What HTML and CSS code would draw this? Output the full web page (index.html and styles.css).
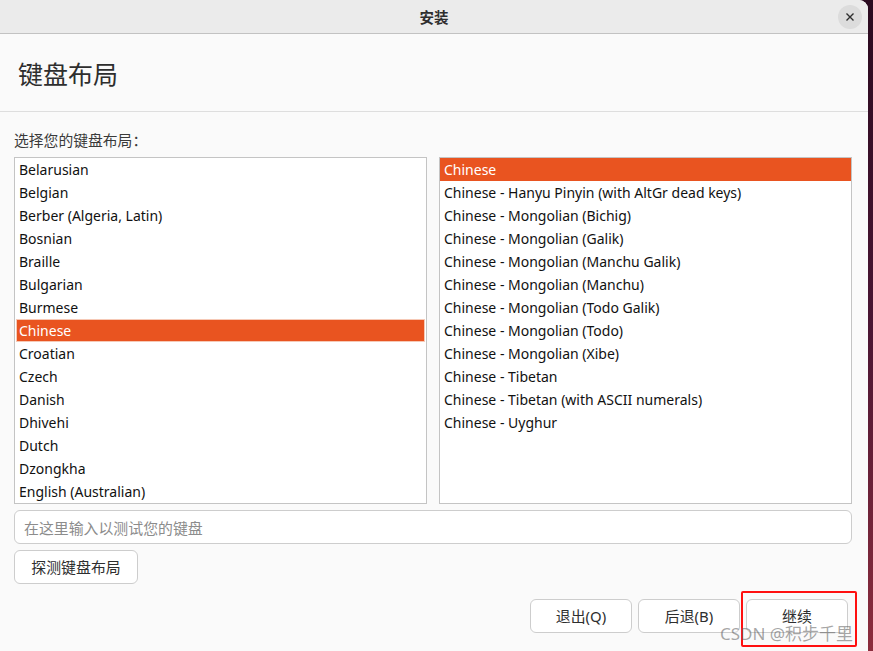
FILE: index.html
```html
<!DOCTYPE html>
<html lang="zh">
<head>
<meta charset="utf-8">
<title>安装</title>
<link rel="stylesheet" href="styles.css">
</head>
<body>
<div class="desktop">
  <div class="window">
    <div class="titlebar">
      <span></span>
      <span class="title">安装</span>
      <button class="close" aria-label="close">
        <svg width="10" height="10" viewBox="0 0 10 10"><path d="M1.5 1.5 L8.5 8.5 M8.5 1.5 L1.5 8.5" stroke="#2e2e2e" stroke-width="1.4" fill="none"/></svg>
      </button>
    </div>
    <div class="header">键盘布局</div>
    <div class="content">
      <div class="label">选择您的键盘布局<span class="colon">：</span></div>
      <div class="lists">
        <div class="list focused">
          <div class="row">Belarusian</div>
          <div class="row">Belgian</div>
          <div class="row">Berber (Algeria, Latin)</div>
          <div class="row">Bosnian</div>
          <div class="row">Braille</div>
          <div class="row">Bulgarian</div>
          <div class="row">Burmese</div>
          <div class="row selected">Chinese</div>
          <div class="row">Croatian</div>
          <div class="row">Czech</div>
          <div class="row">Danish</div>
          <div class="row">Dhivehi</div>
          <div class="row">Dutch</div>
          <div class="row">Dzongkha</div>
          <div class="row">English (Australian)</div>
        </div>
        <div class="list">
          <div class="row selected">Chinese</div>
          <div class="row">Chinese - Hanyu Pinyin (with AltGr dead keys)</div>
          <div class="row">Chinese - Mongolian (Bichig)</div>
          <div class="row">Chinese - Mongolian (Galik)</div>
          <div class="row">Chinese - Mongolian (Manchu Galik)</div>
          <div class="row">Chinese - Mongolian (Manchu)</div>
          <div class="row">Chinese - Mongolian (Todo Galik)</div>
          <div class="row">Chinese - Mongolian (Todo)</div>
          <div class="row">Chinese - Mongolian (Xibe)</div>
          <div class="row">Chinese - Tibetan</div>
          <div class="row">Chinese - Tibetan (with ASCII numerals)</div>
          <div class="row">Chinese - Uyghur</div>
        </div>
      </div>
      <input class="test-input" type="text" placeholder="在这里输入以测试您的键盘">
      <div class="detect-row"><button class="btn detect">探测键盘布局</button></div>
    </div>
    <div class="footer">
      <button class="btn">退出(Q)</button>
      <button class="btn">后退(B)</button>
      <button class="btn continue">继续
        <span class="mark"></span>
      </button>
    </div>
    <div class="watermark">CSDN @积步千里</div>
  </div>
</div>
</body>
</html>
```
FILE: styles.css
```css
* { box-sizing: border-box; }
html, body { margin: 0; padding: 0; }
body {
  width: 873px;
  height: 651px;
  overflow: hidden;
  font-family: "Noto Sans", "Noto Sans CJK SC", sans-serif;
  background: linear-gradient(180deg, #2a0a1f 0%, #4a1533 50%, #8c2d3d 100%);
}
.desktop { width: 873px; height: 651px; }
.window {
  position: relative;
  width: 868px;
  height: 651px;
  background: #fafafa;
  border-top-right-radius: 9px;
  display: flex;
  flex-direction: column;
  overflow: hidden;
}
.titlebar {
  height: 34px;
  flex: none;
  background: #ebebeb;
  border-bottom: 1px solid #c2c2c2;
  display: grid;
  grid-template-columns: 1fr auto 1fr;
  align-items: center;
}
.title {
  font-family: "Noto Sans CJK SC", sans-serif;
  font-weight: 700;
  font-size: 14.5px;
  color: #2e2e2e;
}
.close {
  justify-self: end;
  margin-right: 6px;
  width: 24px;
  height: 24px;
  border-radius: 50%;
  border: none;
  background: #dcdcdc;
  padding: 0;
  display: flex;
  align-items: center;
  justify-content: center;
}
.header {
  height: 78px;
  flex: none;
  padding-left: 18px;
  display: flex;
  align-items: center;
  font-family: "Noto Sans CJK SC", sans-serif;
  font-size: 25px;
  color: #2e2e2e;
  border-bottom: 1px solid #dedede;
}
.content {
  padding: 18px 16px 0 14px;
  display: flex;
  flex-direction: column;
}
.label {
  font-family: "Noto Sans CJK SC", sans-serif;
  font-size: 14.8px;
  line-height: 20px;
  color: #3a3a3a;
  margin-bottom: 7px;
}
.colon { font-family: "Noto Sans CJK TC", sans-serif; }
.lists {
  display: grid;
  grid-template-columns: 413px 413px;
  gap: 12px;
}
.list {
  height: 347px;
  border: 1px solid #c4c4c4;
  background: #ffffff;
  overflow: hidden;
}
.row {
  height: 23px;
  line-height: 23px;
  padding-left: 4px;
  font-size: 14px;
  color: #111111;
  white-space: nowrap;
}
.row.selected {
  background: #e95420;
  color: #ffffff;
}
.list.focused .row.selected {
  margin: 0 1px;
  padding-left: 3px;
  box-shadow: inset 0 0 0 1px #f6c9b6;
}
.test-input {
  margin-top: 6px;
  height: 34px;
  width: 838px;
  border: 1px solid #cdcdcd;
  border-radius: 6px;
  background: #ffffff;
  padding: 0 9px;
  font-family: "Noto Sans CJK SC", sans-serif;
  font-size: 14.9px;
  color: #222;
  outline: none;
}
.test-input::placeholder { color: #8c8c8c; }
.detect-row { margin-top: 6px; display: flex; }
.btn {
  height: 34px;
  border: 1px solid #cdcdcd;
  border-radius: 6px;
  background: #ffffff;
  font-family: "Noto Sans", "Noto Sans CJK SC", sans-serif;
  font-size: 14.9px;
  line-height: 20px;
  color: #2e2e2e;
  padding: 0 0 1px 0;
}
.detect { width: 124px; }
.footer {
  margin-top: auto;
  padding: 0 20px 18px 0;
  display: flex;
  justify-content: flex-end;
  gap: 6px;
}
.footer .btn { width: 102px; }
.continue { position: relative; }
.mark {
  position: absolute;
  left: -6px;
  top: -9px;
  width: 116px;
  height: 56px;
  border: 2px solid #ff1010;
  border-radius: 2px;
}
.watermark {
  position: absolute;
  left: 720px;
  top: 620px;
  font-family: "Noto Sans", "Noto Sans CJK SC", sans-serif;
  font-size: 17px;
  color: rgba(90, 90, 90, 0.55);
  white-space: nowrap;
  pointer-events: none;
}
```
